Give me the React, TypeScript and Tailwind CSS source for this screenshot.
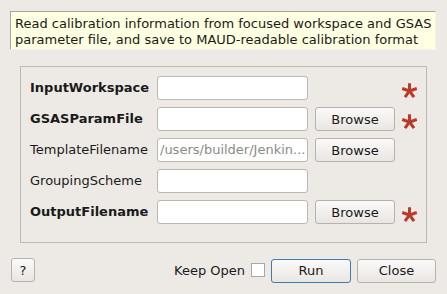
import React from "react";

const font = { fontFamily: '"DejaVu Sans", sans-serif' };

function Star() {
  return (
    <svg width="17" height="17" viewBox="0 0 20 20" className="mt-[6px]">
      {[-90, -18, 54, 126, 198].map((a) => {
        const r = (a * Math.PI) / 180;
        return (
          <line
            key={a}
            x1="10"
            y1="10.5"
            x2={10 + 9 * Math.cos(r)}
            y2={10.5 + 9 * Math.sin(r)}
            stroke="#b83a2b"
            strokeWidth="3.6"
          />
        );
      })}
    </svg>
  );
}

function Btn({ children, w = "w-[80px]", active = false }: { children: React.ReactNode; w?: string; active?: boolean }) {
  return (
    <button
      className={
        "h-[24px] rounded-[3px] border bg-gradient-to-b from-[#fbfaf9] to-[#e9e6e2] text-[13px] text-[#1a1a1a] " +
        w +
        (active ? " border-[#3b7db0]" : " border-[#b6b2ad]")
      }
    >
      {children}
    </button>
  );
}

function Field({ value }: { value?: string }) {
  return (
    <div className="flex h-[24px] w-[151px] items-center overflow-hidden whitespace-nowrap rounded-[3px] border border-[#bab6b1] bg-white pl-[2px] text-[13px] text-[#8d8a86]">
      {value}
    </div>
  );
}

const rows = [
  { label: "InputWorkspace", bold: true, browse: false, star: true },
  { label: "GSASParamFile", bold: true, browse: true, star: true },
  { label: "TemplateFilename", bold: false, browse: true, star: false, value: "/users/builder/Jenkin..." },
  { label: "GroupingScheme", bold: false, browse: false, star: false },
  { label: "OutputFilename", bold: true, browse: true, star: true },
];

export default function App() {
  return (
    <div className="h-[294px] w-[447px] bg-[#edeae6] text-[#1a1a1a]" style={font}>
      <div className="px-[10px] pt-[11px]">
        <div className="h-[39px] border-l border-t border-[#a9a6a2] border-b-[#f4f2ef] border-r-[#f4f2ef] border-b border-r bg-[#ffffe1] pl-[4px] pt-[4px] text-[13px] leading-[16px] w-[426px]">
          Read calibration information from focused workspace and GSAS
          <br />
          parameter file, and save to MAUD-readable calibration format
        </div>
      </div>
      <div className="ml-[20px] mt-[16px] h-[177px] w-[407px] border border-[#bcb8b3] pl-[9px] pt-[9px]">
        <div className="flex flex-col gap-[7px]">
          {rows.map((r) => (
            <div key={r.label} className="flex h-[24px] items-center">
              <div className={"w-[127px] text-[13px] " + (r.bold ? "font-bold" : "")}>{r.label}</div>
              <Field value={r.value} />
              <div className="ml-[7px] w-[80px]">{r.browse && <Btn>Browse</Btn>}</div>
              <div className="ml-[6px] flex h-[24px] w-[17px] items-start">{r.star && <Star />}</div>
            </div>
          ))}
        </div>
      </div>
      <div className="flex items-center px-[11px] pt-[15px]">
        <Btn w="w-[24px]">?</Btn>
        <div className="ml-auto flex items-center">
          <span className="text-[13px]">Keep Open</span>
          <div className="ml-[6px] h-[14px] w-[14px] border border-[#aaa6a1] bg-white" />
          <div className="ml-[6px]">
            <Btn active>Run</Btn>
          </div>
          <div className="ml-[6px]">
            <Btn w="w-[79px]">Close</Btn>
          </div>
        </div>
      </div>
    </div>
  );
}
